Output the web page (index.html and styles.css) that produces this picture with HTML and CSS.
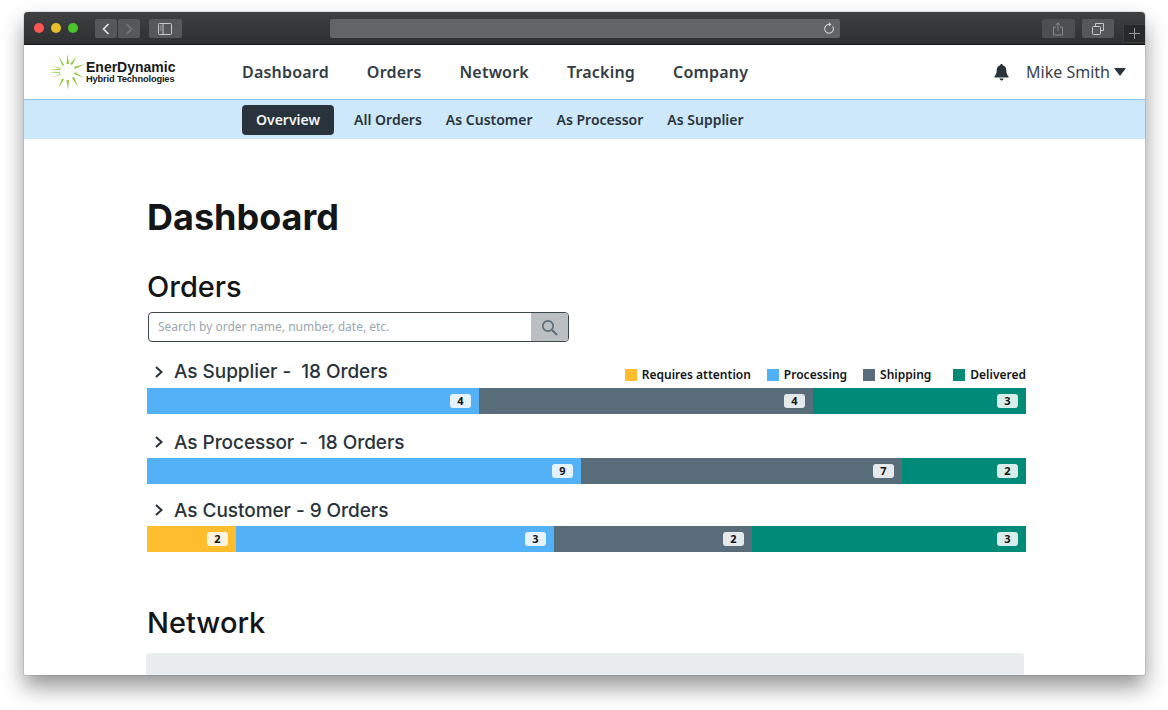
FILE: index.html
```html
<!DOCTYPE html>
<html lang="en">
<head>
<meta charset="utf-8">
<title>EnerDynamic Dashboard</title>
<link rel="stylesheet" href="styles.css">
</head>
<body>
<div class="window">
  <div class="toolbar">
    <div class="lights"><span class="light red"></span><span class="light yellow"></span><span class="light green"></span></div>
    <div class="nav-btns">
      <span class="tbtn narrow"><svg width="10" height="14" viewBox="0 0 10 14"><path d="M7.5 2 2.5 7l5 5" fill="none" stroke="#e8e8e8" stroke-width="1.6"/></svg></span>
      <span class="tbtn narrow"><svg width="10" height="14" viewBox="0 0 10 14"><path d="M2.5 2l5 5-5 5" fill="none" stroke="#777" stroke-width="1.6"/></svg></span>
    </div>
    <span class="tbtn wide sidebar"><svg width="14" height="12" viewBox="0 0 14 12"><rect x=".5" y=".5" width="13" height="11" rx="1" fill="none" stroke="#c8c8c8"/><path d="M5 .5v11" stroke="#c8c8c8"/><path d="M1.8 3h2M1.8 5h2M1.8 7h2" stroke="#aaa"/></svg></span>
    <div class="address"><svg width="12" height="13" viewBox="0 0 12 13"><path d="M9.6 4.2A4.4 4.4 0 1 1 6 2.4" fill="none" stroke="#d0d0d0" stroke-width="1.1"/><path d="M6 .3v4l2.6-2z" fill="#d0d0d0"/></svg></div>
    <span class="tbtn wide dim"><svg width="12" height="14" viewBox="0 0 12 14"><path d="M4 5H1.5v8h9V5H8M6 9V1M3.8 3 6 .8 8.2 3" fill="none" stroke="#8a8a8a"/></svg></span>
    <span class="tbtn wide tabs"><svg width="12" height="12" viewBox="0 0 12 12"><path d="M3.500 3V.5h8v7H9" fill="none" stroke="#c8c8c8"/><rect x=".5" y="3.500" width="8" height="8" rx="1" fill="none" stroke="#c8c8c8"/></svg></span>
    <span class="newtab"><svg width="11" height="11" viewBox="0 0 11 11"><path d="M5.500 0v11M0 5.500h11" stroke="#999"/></svg></span>
  </div>

  <header class="topnav">
    <div class="logo">
      <svg class="sun" width="36" height="36" viewBox="0 0 36 36">
        <g fill="#8fc73e">
          <path d="M0 11.500 12 14v.8zM0 15h11v1.200zM0 18.300h11v1.200zM0 24l12-4v.8z" />
          <path d="M9 1l6 10-1.500 1zM18.500 0l1.500 10h-2.500zM28 2l-5 9-2-1zM36 10l-10 5-1-2zM35 24l-10-4 .8-2zM29 33l-6-9 2-1.200zM19 36l-1.500-10 2.500 0zM9.500 34l3.500-9.500 2 1z"/>
        </g>
      </svg>
      <div class="logo-text"><span class="logo-name">EnerDynamic</span><span class="logo-sub">Hybrid Technologies</span></div>
    </div>
    <nav class="mainlinks">
      <a>Dashboard</a><a>Orders</a><a>Network</a><a>Tracking</a><a>Company</a>
    </nav>
    <div class="user">
      <svg class="bell" width="15" height="17" viewBox="0 0 15 17"><path d="M7.500 0c.8 0 1.300.6 1.300 1.300 2.400.6 3.500 2.600 3.500 5 0 3 .8 4.600 2.200 6v1.200H.5v-1.200c1.400-1.400 2.200-3 2.200-6 0-2.400 1.100-4.400 3.500-5C6.200.6 6.700 0 7.500 0zM5.500 14.500h4A2 2 0 0 1 7.500 16.500a2 2 0 0 1-2-2z" fill="#29333b"/></svg>
      <span class="user-name">Mike Smith</span>
      <span class="caret"></span>
    </div>
  </header>

  <nav class="subnav">
    <a class="active">Overview</a><a>All Orders</a><a>As Customer</a><a>As Processor</a><a>As Supplier</a>
  </nav>

  <main class="content">
    <h1>Dashboard</h1>
    <h2 class="orders-title">Orders</h2>
    <div class="search">
      <span class="search-input">Search by order name, number, date, etc.</span>
      <span class="search-btn"><svg width="17" height="17" viewBox="0 0 17 17"><circle cx="7" cy="7" r="5.200" fill="none" stroke="#5a6e7a" stroke-width="1.700"/><path d="M11 11l5 5" stroke="#5a6e7a" stroke-width="2"/></svg></span>
    </div>

    <section class="group first">
      <div class="group-head">
        <svg class="chev" width="10" height="14" viewBox="0 0 10 14"><path d="M2 2l5.500 5L2 12" fill="none" stroke="#29333b" stroke-width="2"/></svg>
        <h3>As Supplier -&nbsp; 18 Orders</h3>
        <ul class="legend">
          <li class="l1"><i class="sw amber"></i>Requires attention</li>
          <li class="l2"><i class="sw blue"></i>Processing</li>
          <li class="l3"><i class="sw slate"></i>Shipping</li>
          <li class="l4"><i class="sw teal"></i>Delivered</li>
        </ul>
      </div>
      <div class="bar">
        <div class="seg blue" style="width:332px"><b>4</b></div>
        <div class="seg slate" style="width:334px"><b>4</b></div>
        <div class="seg teal" style="width:213px"><b>3</b></div>
      </div>
    </section>

    <section class="group second">
      <div class="group-head">
        <svg class="chev" width="10" height="14" viewBox="0 0 10 14"><path d="M2 2l5.500 5L2 12" fill="none" stroke="#29333b" stroke-width="2"/></svg>
        <h3>As Processor -&nbsp; 18 Orders</h3>
      </div>
      <div class="bar">
        <div class="seg blue" style="width:434px"><b>9</b></div>
        <div class="seg slate" style="width:321px"><b>7</b></div>
        <div class="seg teal" style="width:124px"><b>2</b></div>
      </div>
    </section>

    <section class="group third">
      <div class="group-head">
        <svg class="chev" width="10" height="14" viewBox="0 0 10 14"><path d="M2 2l5.500 5L2 12" fill="none" stroke="#29333b" stroke-width="2"/></svg>
        <h3>As Customer - 9 Orders</h3>
      </div>
      <div class="bar">
        <div class="seg amber" style="width:89px"><b>2</b></div>
        <div class="seg blue" style="width:318px"><b>3</b></div>
        <div class="seg slate" style="width:198px"><b>2</b></div>
        <div class="seg teal" style="width:274px"><b>3</b></div>
      </div>
    </section>

    <h2 class="network-title">Network</h2>
    <div class="panel"><span class="panel-mark"></span></div>
  </main>
</div>
</body>
</html>
```

FILE: styles.css
```css
* { box-sizing: border-box; }
html, body { margin: 0; height: 710px; overflow: hidden; background: #fff; }
body { padding: 12px 23px 0 24px; font-family: "Noto Sans", "Open Sans", sans-serif; color: #29333b; }

.window {
  width: 1121px;
  height: 663px;
  overflow: hidden;
  background: #fff;
  border-radius: 4px 4px 1px 1px;
  box-shadow: 0 12px 22px rgba(0,0,0,.42), 0 0 1px rgba(0,0,0,.8);
}

.toolbar {
  height: 33px;
  display: flex;
  align-items: flex-start;
  padding: 7px 0 0 10px;
  background: linear-gradient(#3e4041, #2d2f30);
  border-bottom: 1px solid #151515;
}
.lights { display: flex; gap: 7px; padding-top: 4px; }
.light { width: 10px; height: 10px; border-radius: 50%; }
.red { background: #fc5753; }
.yellow { background: #e6bf29; }
.green { background: #4bc52d; }
.nav-btns { display: flex; gap: 1px; margin-left: 17px; }
.tbtn { height: 19px; display: flex; align-items: center; justify-content: center; background: #555859; border-radius: 2px; }
.narrow { width: 22px; }
.wide { width: 33px; }
.sidebar { margin-left: 9px; }
.address {
  width: 517px;
  height: 19px;
  margin: 0 202px 0 148px;
  padding-right: 5px;
  display: flex;
  align-items: center;
  justify-content: flex-end;
  background: #626465;
  border-radius: 2px;
}
.dim { background: #4c4f50; }
.tabs { margin-left: 7px; }
.newtab {
  width: 22px;
  height: 19px;
  margin: 5px 0 0 9px;
  display: flex;
  align-items: center;
  justify-content: center;
  background: #262829;
  border: 1px solid #3b3d3e;
  border-right: 0;
}

.topnav {
  height: 55px;
  display: flex;
  align-items: center;
  background: #fff;
  border-bottom: 1px solid #86c5f7;
}
.logo { width: 218px; padding-left: 25px; display: flex; align-items: center; }
.sun { flex: none; }
.logo-text { display: flex; flex-direction: column; margin-left: 1px; font-family: "Liberation Sans", Arial, sans-serif; color: #16191b; white-space: nowrap; }
.logo-name { font-size: 14px; line-height: 14px; font-weight: 700; }
.logo-sub { font-size: 9.3px; line-height: 11px; font-weight: 700; letter-spacing: -.15px; }
.mainlinks { display: flex; gap: 38px; }
.mainlinks a { font-size: 16px; font-weight: 600; letter-spacing: .2px; color: #323c44; }
.user { margin-left: auto; padding-right: 19px; display: flex; align-items: center; }
.bell { display: block; }
.user-name { margin-left: 17px; font-size: 16px; color: #37434b; }
.caret { margin-left: 4px; width: 0; height: 0; border: 6.500px solid transparent; border-top: 8px solid #29333b; border-bottom: 0; }

.subnav {
  height: 39px;
  display: flex;
  align-items: center;
  padding-left: 218px;
  gap: 24px;
  background: #cde7fb;
}
.subnav a { font-size: 14px; font-weight: 600; color: #29333b; }
.subnav a.active {
  height: 30px;
  margin-right: -4px;
  padding: 0 14px;
  display: flex;
  align-items: center;
  border-radius: 4px;
  background: #29333b;
  color: #f2f5f7;
}

.content { padding: 0 0 0 123px; }
h1, h2, h3 { margin: 0; font-family: Inter, Roboto, sans-serif; }
h1 { padding-top: 56px; font-size: 36px; line-height: 44px; font-weight: 700; color: #131517; }
h2 { font-size: 29px; line-height: 36px; font-weight: 500; color: #131517; }
.orders-title { margin-top: 30px; }
.search {
  width: 421px;
  height: 30px;
  margin-top: 7px;
  margin-left: 1px;
  display: flex;
  overflow: hidden;
  border: 1px solid #3c464d;
  border-radius: 4px;
}
.search-input { flex: 1; padding-left: 9px; font-size: 12px; line-height: 27px; color: #99a8b1; }
.search-btn { width: 37px; display: flex; align-items: center; justify-content: center; background: #bcbfc1; }

.group { width: 879px; }
.first { margin-top: 13px; }
.second { margin-top: 12px; }
.third { margin-top: 10px; }
.group-head { height: 32px; padding-left: 7px; display: flex; align-items: center; }
.group.first .group-head { height: 33px; }
.chev { flex: none; margin-right: 10px; }
h3 { font-size: 19px; font-weight: 500; color: #29333b; white-space: nowrap; letter-spacing: -.05px; }
.legend { margin: 6px 0 0 auto; padding: 0; list-style: none; display: flex; font-size: 12px; font-weight: 600; color: #131517; white-space: nowrap; }
.legend li { display: flex; align-items: center; }
.l2 { margin-left: 16px; }
.l3 { margin-left: 16px; }
.l4 { margin-left: 22px; }
.sw { width: 12px; height: 12px; margin-right: 5px; }

.bar { display: flex; height: 26px; }
.seg { display: flex; align-items: center; justify-content: flex-end; padding-right: 8px; }
.seg b { min-width: 21px; height: 14px; border-radius: 3px; font-size: 11px; line-height: 14px; font-weight: 700; text-align: center; color: #131517; background: rgba(255,255,255,.85); }
.amber { background: #fdbd2c; }
.blue { background: #53b1f8; }
.slate { background: #586d79; }
.teal { background: #008a78; }

.network-title { margin-top: 53px; }
.panel { width: 878px; height: 40px; margin: 12px 0 0 -1px; padding: 23px 0 0 17px; background: #eaedf0; border-radius: 4px; }
.panel-mark { display: block; width: 13px; height: 3px; background: #555; }
```
